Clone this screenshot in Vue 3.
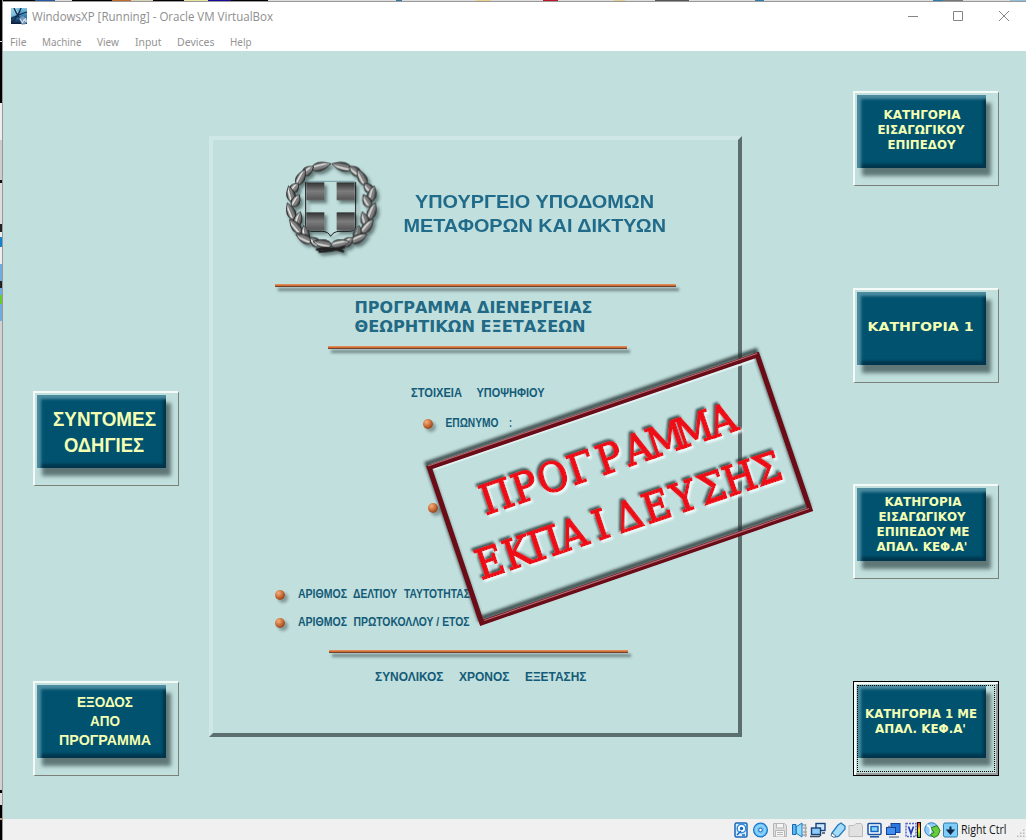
<script setup>
import { h } from 'vue'

// Lines are [text, x, baseline, width]; each one is fitted to its width.
const FitText = (props) =>
  h('svg', { width: props.w, height: props.h, class: 'fit' },
    props.lines.map(([t, x, y, w]) =>
      h('text', { x, y, textLength: w, lengthAdjust: 'spacingAndGlyphs', fill: 'currentColor' }, t)))
FitText.props = ['w', 'h', 'lines']

const menu = [
  ['File', 16.5], ['Machine', 39.5], ['View', 22],
  ['Input', 26.5], ['Devices', 37.5], ['Help', 21.5]
]

const leftButtons = [
  { cls: 'big', lines: [['ΣΥΝΤΟΜΕΣ', 20, 35, 103], ['ΟΔΗΓΙΕΣ', 31, 61, 80]] },
  { cls: 'mid', lines: [['ΕΞΟΔΟΣ', 44, 26, 56], ['ΑΠΟ', 57, 45, 30], ['ΠΡΟΓΡΑΜΜΑ', 26, 64, 92]] }
]
const rightButtons = [
  { cls: 'small', lines: [['ΚΑΤΗΓΟΡΙΑ', 30.5, 28, 77], ['ΕΙΣΑΓΩΓΙΚΟΥ', 24.5, 43, 87], ['ΕΠΙΠΕΔΟΥ', 34.5, 58, 68]] },
  { cls: 'wide', lines: [['ΚΑΤΗΓΟΡΙΑ 1', 14.5, 42.5, 106]] },
  { cls: 'small', lines: [['ΚΑΤΗΓΟΡΙΑ', 31.5, 22, 77], ['ΕΙΣΑΓΩΓΙΚΟΥ', 25.5, 37, 87], ['ΕΠΙΠΕΔΟΥ ΜΕ', 23.5, 52, 93], ['ΑΠΑΛ. ΚΕΦ.Α\'', 23.5, 67, 91]] },
  { cls: 'small', focus: true, lines: [['ΚΑΤΗΓΟΡΙΑ 1 ΜΕ', 12, 37, 112], ['ΑΠΑΛ. ΚΕΦ.Α\'', 22, 52, 91]] }
]

const fields = [
  { cls: 'f1', lines: [['ΕΠΩΝΥΜΟ', 11.5, 16, 53], [':', 75, 16, 3]] },
  { cls: 'f2', lines: [] },
  { cls: 'f3', lines: [['ΑΡΙΘΜΟΣ', 12, 17, 49], ['ΔΕΛΤΙΟΥ', 67, 17, 44], ['ΤΑΥΤΟΤΗΤΑΣ', 118, 17, 66]] },
  { cls: 'f3', lines: [['ΑΡΙΘΜΟΣ', 12, 17, 49], ['ΠΡΩΤΟΚΟΛΛΟΥ / ΕΤΟΣ', 67.5, 17, 116]] }
]

// Letters of the stamp sit centred in equal cells, like a typewriter face.
const stretch = 1.02
const cells = (n, adv) => Array.from({ length: n }, (_, i) => ((14 + i * adv) / stretch).toFixed(2)).join(' ')

// Wreath leaves: [x, y, rotation, length]
const half = [
  [153, 49, -14, 62], [114, 62, -38, 42], [93, 82, -62, 54], [74, 113, -50, 34], [62, 132, -105, 50], [78, 152, -60, 42],
  [62, 184, -112, 54], [84, 208, -72, 48], [76, 229, -130, 54], [105, 249, -100, 46], [102, 265, -155, 54],
  [134, 275, -140, 38], [158, 281, -168, 58]
]
const leaves = [...half, ...half.map(([x, y, r, l]) => [368 - x, y, 180 - r, l])]
</script>

<template>
  <div class="desktop">
    <div class="edge-left"></div>
    <div class="window">
      <div class="edge-top"></div>
      <header class="titlebar">
        <svg class="appicon" width="17" height="17" viewBox="0 0 17 17">
          <defs><linearGradient id="ai" x2="0" y2="1"><stop offset="0" stop-color="#7fc4e2" /><stop offset=".55" stop-color="#2f76ac" /><stop offset="1" stop-color="#0b1a33" /></linearGradient></defs>
          <rect width="16" height="16" fill="url(#ai)" />
          <path d="M0 9L8 6L6 0H0z" fill="#a5daec" opacity=".65" />
          <path d="M0 11Q6 7 16 4M3 0Q7 10 14 16M10 0Q7 9 0 15" stroke="#102b4a" stroke-width="1.3" fill="none" />
          <path d="M8 10l4-2 4 3v4l-5 2z" fill="#7396bc" /><path d="M9 11l3 4M15 10l-4 5M12 12h3v2" stroke="#e4eef5" fill="none" />
        </svg>
        <FitText class="caption" :w="250" :h="26" :lines="[['WindowsXP [Running] - Oracle VM VirtualBox', 0, 19, 241]]" />
        <svg class="winctl" width="104" height="16" viewBox="0 0 104 16" fill="none" stroke="#858585">
          <path d="M0 8.5h10M45.500 3.500h9v9h-9zM91 3l10 10M101 3l-10 10" />
        </svg>
      </header>
      <nav class="menubar">
        <FitText v-for="m in menu" :key="m[0]" class="menuitem" :w="m[1]" :h="20" :lines="[[m[0], 0, 15, m[1]]]" />
      </nav>

      <main class="screen">
        <div class="col left">
          <button v-for="(b, i) in leftButtons" :key="i" class="btn" :class="b.cls">
            <span class="face"><FitText :w="129" :h="73" :lines="b.lines.map(([t, x, y, w]) => [t, x - 4, y - 4, w])" /></span>
          </button>
        </div>

        <section class="panel">
          <div class="head">
            <svg class="emblem" width="130" height="115" viewBox="0 0 390 345">
              <defs>
                <linearGradient id="leaf" x2="0" y2="1"><stop offset="0" stop-color="#2d2d2d" /><stop offset=".35" stop-color="#eceeee" /><stop offset=".6" stop-color="#8c8c8c" /><stop offset="1" stop-color="#333" /></linearGradient>
                <linearGradient id="sq" x2="0" y2="1"><stop offset="0" stop-color="#333" /><stop offset=".5" stop-color="#8b8b8b" /><stop offset="1" stop-color="#5c5c5c" /></linearGradient>
                <filter id="soft" x="-20%" y="-20%" width="150%" height="150%"><feDropShadow dx="8" dy="9" stdDeviation="4" flood-color="#29403f" flood-opacity=".6" /></filter>
              </defs>
              <g filter="url(#soft)">
                <g v-for="(l, i) in leaves" :key="i" :transform="`translate(${l[0]} ${l[1]}) rotate(${l[2]})`">
                  <path :d="`M${-l[3] / 2} 0Q${-l[3] / 5} -26 ${l[3] / 2} 0Q${-l[3] / 5} 26 ${-l[3] / 2} 0z`" fill="url(#leaf)" stroke="#262626" stroke-width="2.500" />
                  <path :d="`M${-l[3] / 2} 0H${l[3] / 3}`" stroke="#333" stroke-width="1.500" />
                </g>
                <path d="M138 299Q180 289 222 304M145 305Q184 304 225 291" stroke="#202020" stroke-width="8" fill="none" />
              </g>
              <g filter="url(#soft)">
                <path d="M107 96V226Q108 244 126 244H157Q175 245 182 259Q190 245 207 244H238Q257 244 257 226V96" fill="none" stroke="#151515" stroke-width="3" />
                <path v-for="p in ['109 97', '200 97', '109 187', '200 187']" :key="p" :d="`M${p}h54v54h-54z`" fill="url(#sq)" />
              </g>
              <path d="M108 94H256" stroke="#477f88" stroke-width="2" />
              <g v-for="n in 8" :key="n" stroke="#1b1b1b" stroke-width="1.500" opacity=".5">
                <path :d="`M110 ${96 + n * 6}h52M200 ${96 + n * 6}h52M110 ${186 + n * 6}h52M200 ${186 + n * 6}h52`" />
              </g>
            </svg>
            <FitText class="ministry" :w="280" :h="115" :lines="[['ΥΠΟΥΡΓΕΙΟ ΥΠΟΔΟΜΩΝ', 15, 58.4, 239], ['ΜΕΤΑΦΟΡΩΝ ΚΑΙ ΔΙΚΤΥΩΝ', 3.5, 82.4, 262.500]]" />
          </div>
          <div class="rule wide-rule"></div>
          <FitText class="program" :w="525" :h="59" :lines="[['ΠΡΟΓΡΑΜΜΑ ΔΙΕΝΕΡΓΕΙΑΣ', 141.5, 25.5, 238], ['ΘΕΩΡΗΤΙΚΩΝ ΕΞΕΤΑΣΕΩΝ', 141.5, 45, 231]]" />
          <div class="rule r2"></div>
          <FitText class="label" :w="525" :h="62" :lines="[['ΣΤΟΙΧΕΙΑ', 198, 48, 51], ['ΥΠΟΨΗΦΙΟΥ', 263.5, 48, 68]]" />
          <div v-for="(f, i) in fields" :key="i" class="field" :class="[f.cls, 'n' + i]">
            <i class="bullet"></i>
            <FitText :w="190" :h="28" :lines="f.lines" />
          </div>
          <div class="rule r3"></div>
          <FitText class="label" :w="525" :h="60" :lines="[['ΣΥΝΟΛΙΚΟΣ', 162, 28, 68.500], ['ΧΡΟΝΟΣ', 246, 28, 50.500], ['ΕΞΕΤΑΣΗΣ', 312, 28, 61.500]]" />
        </section>

        <div class="col right">
          <button v-for="(b, i) in rightButtons" :key="i" class="btn" :class="[b.cls, { focus: b.focus }]">
            <span class="face"><FitText :w="129" :h="73" :lines="b.lines.map(([t, x, y, w]) => [t, x - 4, y - 4, w])" /></span>
          </button>
        </div>

        <svg class="stamp" width="410" height="300" viewBox="415 340 410 300">
          <defs>
            <filter id="fshadow" x="-10%" y="-10%" width="120%" height="120%">
              <feDropShadow dx="-2" dy="-4" stdDeviation="1.6" flood-color="#213332" flood-opacity=".8" />
            </filter>
            <filter id="tshadow" x="-10%" y="-20%" width="120%" height="140%">
              <feGaussianBlur in="SourceAlpha" stdDeviation="1.3" result="b" />
              <feOffset in="b" dx="-2.500" dy="-2.500" result="o" /><feFlood flood-color="#1d3333" flood-opacity=".8" /><feComposite in2="o" operator="in" result="dark" />
              <feOffset in="b" dx="1.500" dy="1.500" result="p" /><feFlood flood-color="#f4ffff" flood-opacity=".9" /><feComposite in2="p" operator="in" result="light" />
              <feMerge><feMergeNode in="light" /><feMergeNode in="dark" /><feMergeNode in="SourceGraphic" /></feMerge>
            </filter>
          </defs>
          <path d="M432 470L757 359L807 507" fill="none" stroke="#e1f1f0" stroke-width="2" />
          <path d="M429.300 467.500L757.300 355L810 509.500L481.700 622.700z" fill="none" stroke="#6b0719" stroke-width="5" filter="url(#fshadow)" />
          <path d="M428 466L757 353.500M484 620.500L809 508.500" stroke="#b76a75" stroke-width="1.200" />
          <g filter="url(#tshadow)" class="stamp-text" fill="#ee1119" text-anchor="middle">
            <text :transform="`translate(488 514.5) rotate(-18.7) scale(${stretch} 1)`" :x="cells(9, 29.8)">ΠΡΟΓΡΑΜΜΑ</text>
            <text :transform="`translate(481 580) rotate(-18.5) scale(${stretch} 1)`" :x="cells(11, 29.3)">ΕΚΠΑΙΔΕΥΣΗΣ</text>
          </g>
        </svg>
      </main>

      <footer class="status">
        <svg class="tray" width="228" height="18" viewBox="0 0 228 18" fill="none">
          <!-- hard disk -->
          <rect x="2" y="2" width="12" height="14" rx="1.500" fill="#d9efff" stroke="#1768b8" stroke-width="1.500" />
          <circle cx="8.500" cy="7.500" r="4.300" fill="#fff" stroke="#338be0" stroke-width="1.500" /><circle cx="8.500" cy="7.500" r="1.700" fill="#1768b8" /><path d="M4 14l4-4M9 14h3" stroke="#1768b8" stroke-width="1.500" />
          <!-- optical disc -->
          <circle cx="27.500" cy="9" r="6.900" fill="#6ec4f7" stroke="#1d79c8" stroke-width="1.300" /><circle cx="27.500" cy="9" r="4.500" stroke="#a8e1ff" /><circle cx="27.500" cy="9" r="1.800" fill="#fff" stroke="#1768b8" />
          <!-- floppy -->
          <path d="M40.500 2.500h11l2 2v11h-13z" fill="#dedede" stroke="#b6b6b6" /><path d="M43.500 3v4h7V3M42.500 15.500v-6h9v6M44 11.500h6M44 13.500h6" fill="#f4f4f4" stroke="#b8b8b8" />
          <!-- audio -->
          <path d="M69 4h4M70 7h4M70 11h4M69 14h5M72.500 3v13" stroke="#aaa" stroke-width="1.500" /><path d="M63 6l6-4v14l-6-4z" fill="#8edbff" stroke="#167dbf" /><path d="M59.500 3.500h3.500v10h-3.500z" fill="#5db9ef" stroke="#1768b8" />
          <!-- network -->
          <rect x="83" y="2.500" width="9" height="7" fill="#c8e8ff" stroke="#1a427a" stroke-width="1.400" /><rect x="78.500" y="7" width="9" height="6.500" fill="#8acbfa" stroke="#1a427a" stroke-width="1.400" /><path d="M77 15.500h9l2-1.500M89 12h3" stroke="#394c63" stroke-width="1.300" />
          <!-- usb -->
          <path d="M99 12l6-8 3-2 4 3v3l-6 7q-4 2-7-1z" fill="#a4ddfa" stroke="#267bbb" stroke-width="1.300" /><path d="M99 12l4 3-2 1.500-3-2z" fill="#fff" stroke="#436f93" />
          <!-- shared folder -->
          <path d="M116 15.500v-11h5l2-2h5l1.500 2v11z" fill="#e1e1e1" stroke="#bbb" />
          <!-- display -->
          <rect x="135" y="2.500" width="13" height="11" rx="1" fill="#fff" stroke="#1551a1" stroke-width="1.500" /><rect x="138" y="5.500" width="7" height="5" fill="#8bd3ff" stroke="#1667c4" stroke-width="1.500" /><path d="M137 15.800h9" stroke="#1551a1" stroke-width="1.500" />
          <!-- recording -->
          <rect x="158" y="2.500" width="9" height="9" fill="#2a77df" stroke="#174598" /><rect x="153.500" y="6.500" width="9" height="7" fill="#3f91f0" stroke="#173d96" /><path d="M156 16h10M155 5.500h2" stroke="#7b8a9b" stroke-width="1.500" />
          <!-- virtualization -->
          <rect x="173" y="2.500" width="10" height="13" fill="#e8f0ff" stroke="#5566c4" stroke-width="1.500" stroke-dasharray="2 1" /><path d="M175.500 5.500l2.500 7 2.500-7" stroke="#273aa9" stroke-width="1.700" /><rect x="184.500" y="1.500" width="3" height="15" fill="url(#meter)" stroke="#111" />
          <defs><linearGradient id="meter" x2="0" y2="1"><stop stop-color="#ed2b19" /><stop offset=".5" stop-color="#ffe51d" /><stop offset="1" stop-color="#33b924" /></linearGradient></defs>
          <!-- mouse integration -->
          <circle cx="198.500" cy="8.500" r="6.800" fill="#8ecbf5" stroke="#3b83bd" /><path d="M198 7l6-2.500 3 5-2 5-4 2-4-3 4-2z" fill="#6acb3b" stroke="#1f7e24" /><path d="M194 4q5 2 3 9" stroke="#fff" stroke-width="1.500" />
          <!-- host key -->
          <rect x="210.500" y="2" width="14" height="14" rx="1.500" fill="#7fcdf8" stroke="#2b7dad" /><path d="M217.500 5.500v4M215 9.500l2.500 3 2.500-3z" fill="#10294a" stroke="#10294a" stroke-width="2" />
        </svg>
        <FitText class="hostkey" :w="46" :h="20" :lines="[['Right Ctrl', 0, 14.5, 45.5]]" />
        <svg class="grip" width="12" height="12" viewBox="0 0 12 12" fill="#b7b7b7">
          <path d="M8 0h2v2h-2zM4 4h2v2h-2zM8 4h2v2h-2zM0 8h2v2h-2zM4 8h2v2h-2zM8 8h2v2h-2z" />
        </svg>
      </footer>
    </div>
  </div>
</template>

<style>
html, body { margin: 0; overflow: hidden; }
</style>

<style scoped>
.desktop { display: flex; width: 1026px; height: 840px; overflow: hidden; font-family: "Liberation Sans", Arial, sans-serif; background: #fff; }
.edge-left { width: 3px; flex: none; border-right: 1px solid #999; box-sizing: border-box;
  background: linear-gradient(#000 41px, #ddd 41px 42px, #000 42px 103px, #eee 103px 140px, #ccc 140px 180px, #111 180px 183px, #ddd 183px 224px, #222 224px 232px, #eee 232px 237px, #1482ce 237px 247px, #eee 247px 264px, #70ace0 264px 281px, #222 281px 288px, #70ace0 288px 295px, #67c92b 295px 304px, #70ace0 304px 321px, #d1d1d1 321px 790px, #000 790px 793px, #ddd 793px 805px, #000 805px 818px, #ba9a80 818px 820px, #000 820px); }
.window { flex: 1; display: flex; flex-direction: column; min-width: 0; }
.edge-top { height: 2px; flex: none; box-sizing: border-box; border-bottom: 1px solid #999;
  background: linear-gradient(90deg, #000 32px, #2758a1 32px 52px, #ddd 52px 69px, #000 69px 109px, #c46a28 109px 128px, #d8d0b9 128px 150px, #000 150px 181px, #e6e39b 181px 205px, #1a0899 205px 228px, #000 228px 265px, #ddd 265px 393px, #2d789c 393px 399px, #ddd 399px 473px, #e9d18c 473px 488px, #ddd 488px 540px, #bd1429 540px 555px, #ddd 555px 611px, #e2ce91 611px 622px, #ddd 622px 652px, #555 652px 686px, #ddd 686px 752px, #3278a8 752px 761px, #ddd 761px 930px, #3278a8 930px 940px, #777 940px 960px, #ddd 960px 1007px, #91bfdc 1007px); }
.fit { display: block; flex: none; overflow: visible; }
.titlebar { display: flex; height: 28px; flex: none; background: #fff; }
.appicon { margin: 6px 0 0 8px; }
.caption { margin-left: 4px; color: #8e8e8e; font: 12px "Open Sans", sans-serif; }
.winctl { margin: 6px 14px 0 auto; }
.menubar { display: flex; height: 21px; flex: none; padding: 0 0 0 7px; gap: 15.700px; background: #fff; color: #949494; font: 11.500px "Noto Sans", sans-serif; }
.menuitem { margin-top: 1px; }
.screen { display: flex; position: relative; height: 768px; flex: none; background: #c1dfdd; }
.col { display: flex; flex-direction: column; flex: none; width: 146px; }
.left { margin-left: 30px; padding-top: 340px; gap: 195px; }
.right { margin-left: 111px; padding-top: 40px; gap: 101.700px; }
.btn { display: flex; align-items: flex-start; justify-content: flex-start; width: 146px; height: 95px; flex: none; box-sizing: border-box; margin: 0; padding: 2px; background: #c1dfdd; border: 2px solid; border-color: #f3faf7 #7b8178 #7b8178 #f3faf7; border-right-width: 1px; border-bottom-width: 1px; }
.face { display: block; width: 129px; height: 73px; flex: none; box-sizing: border-box; color: #f5ffb4; background: #00526e;
  box-shadow: inset 4px 4px 3px #4c8ca0, inset -3px -4px 3px #00354d, 5px 8px 4px #5f7777; }
.focus { border: 1px solid #000; padding: 3px; box-shadow: inset 2px 2px #f3faf7, inset -2px -2px #999; outline: 1px dotted #000; outline-offset: -5px; }
.big { font: bold 19.500px "Liberation Sans", sans-serif; }
.mid { font: bold 15.500px "Liberation Sans", sans-serif; }
.small { font: bold 12px "DejaVu Sans", sans-serif; }
.wide { font: bold 13px "DejaVu Sans", sans-serif; }
.panel { width: 533px; height: 601px; flex: none; box-sizing: border-box; margin: 85px 0 0 30px; border: 4px solid; border-color: #cfe8e7 #5d6e6e #5d6e6e #cfe8e7; color: #135b78; }
.head { display: flex; height: 144px; padding: 10px 0 0 57px; box-sizing: border-box; }
.ministry { color: #216b8a; font: bold 19px "Liberation Sans", sans-serif; }
.program { color: #216984; font: bold 16px "DejaVu Sans", sans-serif; }
.rule { height: 3px; background: linear-gradient(#dd8c59 1px, #d06d33 1px 2px, #75432c 2px); box-shadow: 3px 4px 3px #6f8585; }
.wide-rule { width: 401px; margin-left: 62px; }
.r2 { width: 299px; margin-left: 115px; }
.r3 { width: 299px; margin: 13px 0 0 116px; }
.label { font: bold 13px "Liberation Sans", sans-serif; }
.field { display: flex; align-items: center; height: 28px; font: bold 12px "Liberation Sans", sans-serif; }
.bullet { width: 10px; height: 10px; margin: 0 1px 1px 0; flex: none; border-radius: 50%; background: radial-gradient(circle at 35% 30%, #f3b080, #c96b35 45%, #6e3013 90%); box-shadow: 3px 3px 3px #859b9a; }
.f1 { height: 27px; padding-left: 210px; }
.f2 { margin-top: 56px; padding-left: 215px; }
.f3 { padding-left: 62px; }
.n2 { margin-top: 59px; }
.stamp { position: absolute; left: 412px; top: 289px; }
.stamp-text { font: 41px "DejaVu Serif Condensed", "DejaVu Serif", serif; stroke: #ee1119; stroke-width: 1.300px; }
.status { display: flex; height: 21px; flex: none; background: #f0f0f0; color: #151515; font: 12px "Open Sans", sans-serif; }
.tray { margin: 2px 0 0 730px; flex: none; }
.hostkey { margin-left: 0; }
.grip { margin: 9px 0 0 10px; }
</style>
